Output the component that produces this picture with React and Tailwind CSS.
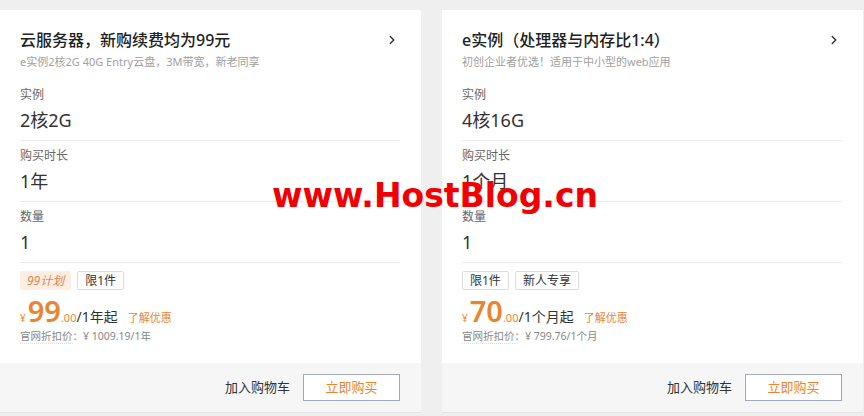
import { ChevronRight } from 'lucide-react';

const font = { fontFamily: '"Noto Sans", "Noto Sans CJK SC", sans-serif' };

const products = [
  {
    title: '云服务器，新购续费均为99元',
    desc: 'e实例2核2G 40G Entry云盘，3M带宽，新老同享',
    fields: [
      { label: '实例', value: '2核2G' },
      { label: '购买时长', value: '1年' },
      { label: '数量', value: '1' },
    ],
    tags: [{ text: '99计划', hot: true }, { text: '限1件' }],
    price: '99',
    unit: '/1年起',
    original: '：¥ 1009.19/1年',
  },
  {
    title: 'e实例（处理器与内存比1:4）',
    desc: '初创企业者优选！适用于中小型的web应用',
    fields: [
      { label: '实例', value: '4核16G' },
      { label: '购买时长', value: '1个月' },
      { label: '数量', value: '1' },
    ],
    tags: [{ text: '限1件' }, { text: '新人专享' }],
    price: '70',
    unit: '/1个月起',
    original: '：¥ 799.76/1个月',
  },
];

const Tag = ({ text, hot }) => (
  <span
    className={`h-[19px] px-[7px] flex items-center rounded-[2px] text-[12px] leading-none ${
      hot ? 'bg-[#fdede3] text-[#e0864f] italic' : 'bg-white border border-[#dcdcdc] text-[#333]'
    }`}
  >
    {text}
  </span>
);

const Card = ({ p }) => (
  <div className="w-[421px] bg-white flex flex-col border-b border-[#e2e2e2]">
    <div className="pl-[20px] pr-[21px] pt-[19px] pb-[19px]">
      <div className="flex items-center justify-between h-[22px]">
        <span className="text-[16px] font-medium text-[#222] leading-[22px]">{p.title}</span>
        <ChevronRight size={14} strokeWidth={2.5} className="text-[#333] mr-[1px]" />
      </div>
      <div className="mt-[3px] text-[11px] leading-[16px] text-[#a0a0a0]">{p.desc}</div>
      <div className="mt-[17px]">
        {p.fields.map((f) => (
          <div key={f.label} className="border-b border-[#ebebeb] pb-[7px] mb-[7px]">
            <div className="text-[12px] leading-[16px] text-[#666]">{f.label}</div>
            <div className="mt-[4px] text-[18px] leading-[26px] text-[#333]">{f.value}</div>
          </div>
        ))}
      </div>
      <div className="flex gap-[6px] mt-[8px]">
        {p.tags.map((t) => (
          <Tag key={t.text} {...t} />
        ))}
      </div>
      <div className="flex items-baseline mt-[5px] h-[32px]">
        <span className="text-[10px] text-[#e8862f] mr-[2px]">¥</span>
        <span className="text-[29px] font-semibold text-[#e8862f] leading-[32px]">{p.price}</span>
        <span className="text-[11px] text-[#e8862f]">.00</span>
        <span className="text-[14px] text-[#333]">{p.unit}</span>
        <span className="text-[11px] text-[#e8862f] ml-[10px]">了解优惠</span>
      </div>
      <div className="text-[10.5px] leading-[16px] text-[#888] mt-[1px]">
        <span className="border-b border-dotted border-[#ddd]">官网折扣价</span>
        {p.original}
      </div>
    </div>
    <div className="mt-auto h-[51px] bg-[#f6f6f6] flex items-center justify-end pr-[21px]">
      <span className="text-[13px] text-[#333] mr-[13px]">加入购物车</span>
      <button className="w-[97px] h-[27px] bg-white border border-[#a3a9b6] text-[13px] text-[#e8862f]">
        立即购买
      </button>
    </div>
  </div>
);

export default function App() {
  return (
    <div className="relative w-[864px] h-[416px] bg-[#efefef] overflow-hidden" style={font}>
      <div className="flex gap-[21px] pt-[10px] h-[413px]">
        {products.map((p) => (
          <Card key={p.title} p={p} />
        ))}
      </div>
      <div
        className="absolute left-[272px] top-[176px] text-[33px] font-bold text-[#f00000] leading-[40px]"
        style={{ fontFamily: '"DejaVu Sans", sans-serif' }}
      >
        www.HostBlog.cn
      </div>
    </div>
  );
}
